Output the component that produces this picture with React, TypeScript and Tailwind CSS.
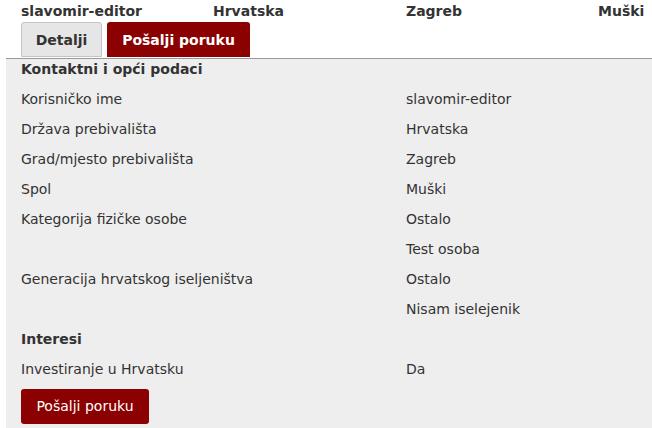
export default function App() {
  const rows: [string, string][] = [
    ["Korisničko ime", "slavomir-editor"],
    ["Država prebivališta", "Hrvatska"],
    ["Grad/mjesto prebivališta", "Zagreb"],
    ["Spol", "Muški"],
    ["Kategorija fizičke osobe", "Ostalo"],
    ["", "Test osoba"],
    ["Generacija hrvatskog iseljeništva", "Ostalo"],
    ["", "Nisam iselejenik"],
  ];

  return (
    <div
      className="min-h-screen bg-white text-[14px] text-[#333]"
      style={{ fontFamily: '"DejaVu Sans", Verdana, sans-serif' }}
    >
      {/* Header summary */}
      <div className="grid h-[22px] grid-cols-[192px_193px_192px_45px] items-center pl-[21px] text-[14px] font-bold leading-none">
        <span>slavomir-editor</span>
        <span>Hrvatska</span>
        <span>Zagreb</span>
        <span className="text-right">Muški</span>
      </div>

      {/* Tabs */}
      <div className="flex h-[36px] items-start gap-[5px] pl-[21px]">
        <button className="h-[35px] w-[81px] rounded-t-[3px] border border-[#c4c4c4] bg-[#e6e6e6] pt-[1px] font-bold text-[#333]">
          Detalji
        </button>
        <button className="h-[35px] w-[143px] rounded-t-[3px] bg-[#8b0000] pt-[1px] font-bold text-white">
          Pošalji poruku
        </button>
      </div>

      {/* Panel */}
      <div className="ml-[6px] border-t border-[#999] bg-[#eeeeee] pb-[6px] pl-[15px]">
        <div className="h-[25px] font-bold">Kontaktni i opći podaci</div>
        {rows.map(([label, value], i) => (
          <div key={i} className="flex h-[30px] items-center">
            <span className="w-[385px]">{label}</span>
            <span>{value}</span>
          </div>
        ))}
        <div className="flex h-[30px] items-center font-bold">Interesi</div>
        <div className="flex h-[30px] items-center">
          <span className="w-[385px]">Investiranje u Hrvatsku</span>
          <span>Da</span>
        </div>
        <button className="mt-[5px] h-[35px] w-[128px] rounded-[3px] bg-[#8b0000] text-white">
          Pošalji poruku
        </button>
      </div>
    </div>
  );
}
